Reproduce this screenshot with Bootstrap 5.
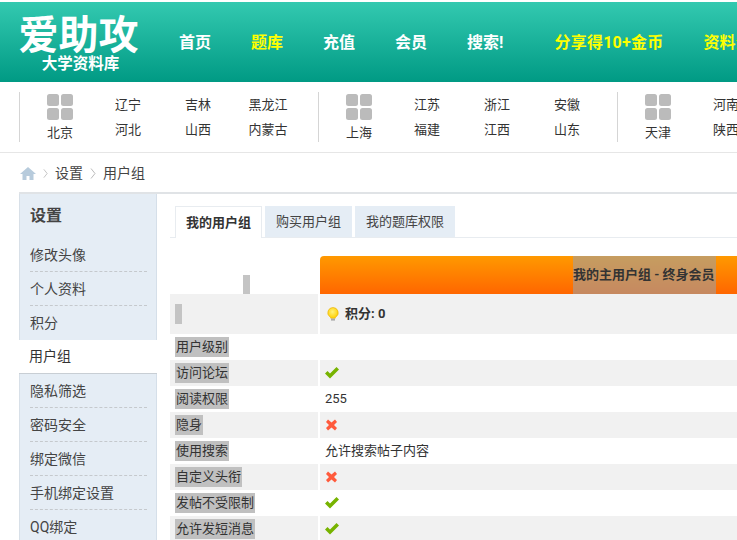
<!DOCTYPE html>
<html lang="zh">
<head>
<meta charset="UTF-8">
<title>用户组</title>
<link href="https://cdn.jsdelivr.net/npm/bootstrap@5.3.0/dist/css/bootstrap.min.css" rel="stylesheet">
<style>
html, body { overflow: hidden; }
body { font-family: Roboto, "Noto Sans CJK SC", sans-serif; font-size: 13px; color: #333; background: #fff; width: 737px; height: 540px; }
.page-wrap { width: 1180px; }
a { color: inherit; text-decoration: none; }

.top-head { margin-top: 2px; height: 80px; background: linear-gradient(#33c9b0, #009a84); padding-left: 18px; }
.logo-box { width: 121px; color: #fff; font-weight: 700; text-align: center; margin-right: 40px; }
.logo-main { font-size: 40px; line-height: 40px; margin-top: 14px; white-space: nowrap; }
.logo-sub { font-size: 15.500px; line-height: 16px; padding-left: 4px; white-space: nowrap; }
.top-menu { gap: 40px; font-size: 16px; font-weight: 700; color: #fff; padding-top: 2px; white-space: nowrap; }
.top-menu .hot { color: #ff0; }
.top-menu .share-link { margin-left: 11px; letter-spacing: .25px; }

.area-bar { height: 71px; border-bottom: 1px solid #e6e6e6; padding: 10px 0 0 19px; }
.area-group { width: 299px; height: 50px; border-left: 1px solid #d5d5d5; flex: none; }
.area-city { width: 80px; text-align: center; line-height: 14px; }
.grid-ico { display: block; margin: 2px auto 6px; }
.area-list { display: grid; grid-template-columns: 70px 70px 70px; justify-items: center; line-height: 25px; width: 210px; margin-left: -7px; }

.crumbs { height: 39px; padding: 1px 0 0 20px; color: #444; font-size: 14px; }
.crumb-sep { margin: 0 7px; }

.main-box { margin-left: 19px; border-top: 2px solid #e0e3e6; }
.side-col { width: 138px; flex: none; background: #e5edf5; border-left: 1px solid #d8e0e8; border-right: 1px solid #d5dfe9; padding-bottom: 60px; }
.side-title { font-size: 16px; font-weight: 700; height: 44px; line-height: 44px; padding-left: 10px; color: #444; }
.side-item { height: 34px; line-height: 34px; font-size: 14px; margin: 0 9px 0 10px; color: #444; border-bottom: 1px dashed #c5c9cd; }
.side-item.flat { border-bottom: 0; }
.side-on { height: 34px; line-height: 33px; font-size: 14px; padding-left: 10px; margin: 0 -1px; background: #fff; border-bottom: 1px solid #c8ced4; color: #333; }

.content-col { padding: 12px 0 0 13px; flex: 1; }
.tab-row { height: 32px; gap: 3px; border-bottom: 1px solid #e8ecf0; padding-left: 5px; }
.tab-btn { height: 31px; line-height: 31px; padding: 0 11px; background: #e5edf5; color: #444; }
.tab-btn.on { font-weight: 700; background: #fff; border: 1px solid #e8ecf0; border-bottom: 0; height: 32px; padding: 0 10px; color: #333; }

.group-tbl { margin-top: 18px; }
.head-row { height: 38px; }
.lbl-cell { width: 150px; flex: none; padding-left: 5px; border-right: 2px solid #fff; }
.orange-head { width: 700px; background: linear-gradient(#ff9900, #ff6600); border-radius: 4px 0 0 0; font-weight: 700; color: #333; height: 38px; line-height: 38px; padding-left: 253px; }
.orange-head span { display: inline-block; background: rgba(160,160,160,.6); height: 38px; padding-right: 1px; }
.gray-stub { display: block; background: #c4c4c4; }
.stub-top { width: 7px; height: 19px; margin-left: 0; }
.stub-score { width: 7px; height: 20px; }
.data-row { height: 26px; line-height: 26px; }
.data-row.alt { background: #f1f1f1; }
.score-row { height: 40px; line-height: 40px; background: #f1f1f1; }
.lbl-mark { background: #c0c0c0; display: inline-block; height: 20px; line-height: 20px; padding: 0 1px; color: #333; }
.val-cell { padding-left: 5px; }
</style>
</head>
<body>
<div class="page-wrap">

  <div class="top-head d-flex">
    <div class="logo-box">
      <div class="logo-main">爱助攻</div>
      <div class="logo-sub">大学资料库</div>
    </div>
    <div class="top-menu d-flex align-items-center">
      <a href="#">首页</a>
      <a href="#" class="hot">题库</a>
      <a href="#">充值</a>
      <a href="#">会员</a>
      <a href="#">搜索!</a>
      <a href="#" class="hot share-link">分享得10+金币</a>
      <a href="#" class="hot">资料分享</a>
    </div>
  </div>

  <div class="area-bar d-flex">
    <div class="area-group d-flex">
      <div class="area-city">
        <svg class="grid-ico" width="26" height="26" viewBox="0 0 26 26"><g fill="#bbb"><rect width="12" height="12" rx="2.500"/><rect x="14" width="12" height="12" rx="2.500"/><rect y="14" width="12" height="12" rx="2.500"/><rect x="14" y="14" width="12" height="12" rx="2.500"/></g></svg>
        北京
      </div>
      <div class="area-list"><a href="#">辽宁</a><a href="#">吉林</a><a href="#">黑龙江</a><a href="#">河北</a><a href="#">山西</a><a href="#">内蒙古</a></div>
    </div>
    <div class="area-group d-flex">
      <div class="area-city">
        <svg class="grid-ico" width="26" height="26" viewBox="0 0 26 26"><g fill="#bbb"><rect width="12" height="12" rx="2.500"/><rect x="14" width="12" height="12" rx="2.500"/><rect y="14" width="12" height="12" rx="2.500"/><rect x="14" y="14" width="12" height="12" rx="2.500"/></g></svg>
        上海
      </div>
      <div class="area-list"><a href="#">江苏</a><a href="#">浙江</a><a href="#">安徽</a><a href="#">福建</a><a href="#">江西</a><a href="#">山东</a></div>
    </div>
    <div class="area-group d-flex">
      <div class="area-city">
        <svg class="grid-ico" width="26" height="26" viewBox="0 0 26 26"><g fill="#bbb"><rect width="12" height="12" rx="2.500"/><rect x="14" width="12" height="12" rx="2.500"/><rect y="14" width="12" height="12" rx="2.500"/><rect x="14" y="14" width="12" height="12" rx="2.500"/></g></svg>
        天津
      </div>
      <div class="area-list"><a href="#">河南</a><a href="#">湖北</a><a href="#">湖南</a><a href="#">陕西</a><a href="#">四川</a><a href="#">重庆</a></div>
    </div>
  </div>

  <div class="crumbs d-flex align-items-center">
    <svg width="16" height="13" viewBox="0 0 16 13"><path d="M8 0 0 7h2.500v6h4V9h3v4h4V7H16z" fill="#b7cbdc"/></svg>
    <svg class="crumb-sep" width="5" height="11" viewBox="0 0 6 11"><path d="M1 .5 5 5.500 1 10.500" fill="none" stroke="#bbb"/></svg>
    <a href="#">设置</a>
    <svg class="crumb-sep" width="6" height="11" viewBox="0 0 6 11"><path d="M1 .5 5 5.500 1 10.500" fill="none" stroke="#bbb"/></svg>
    <a href="#">用户组</a>
  </div>

  <div class="main-box d-flex">
    <div class="side-col">
      <div class="side-title">设置</div>
      <div class="side-item">修改头像</div>
      <div class="side-item">个人资料</div>
      <div class="side-item flat">积分</div>
      <div class="side-on">用户组</div>
      <div class="side-item">隐私筛选</div>
      <div class="side-item">密码安全</div>
      <div class="side-item">绑定微信</div>
      <div class="side-item">手机绑定设置</div>
      <div class="side-item flat">QQ绑定</div>
    </div>

    <div class="content-col">
      <div class="tab-row d-flex">
        <a href="#" class="tab-btn on">我的用户组</a>
        <a href="#" class="tab-btn">购买用户组</a>
        <a href="#" class="tab-btn">我的题库权限</a>
      </div>

      <div class="group-tbl">
        <div class="head-row d-flex">
          <div class="lbl-cell d-flex justify-content-center align-items-end"><i class="gray-stub stub-top"></i></div>
          <div class="orange-head"><span>我的主用户组 - 终身会员</span></div>
        </div>
        <div class="score-row d-flex">
          <div class="lbl-cell d-flex align-items-center"><i class="gray-stub stub-score"></i></div>
          <div class="val-cell fw-bold d-flex align-items-center gap-1">
            <svg width="16" height="16" viewBox="0 0 16 16"><defs><radialGradient id="bulbFill" cx=".45" cy=".4" r=".6"><stop offset="0" stop-color="#fff27a"/><stop offset="1" stop-color="#ffcf00"/></radialGradient></defs><path d="M8 1.500a5.200 5.200 0 0 0-3.200 9.300c.7.600 1 .9 1 1.500h4.400c0-.6.300-.9 1-1.500A5.200 5.200 0 0 0 8 1.500z" fill="url(#bulbFill)" stroke="#e8ad00" stroke-width=".6"/><rect x="6" y="12.600" width="4" height="2" fill="#aaa"/></svg>
            <span>积分: 0</span>
          </div>
        </div>
        <div class="data-row d-flex"><div class="lbl-cell"><span class="lbl-mark">用户级别</span></div><div class="val-cell"></div></div>
        <div class="data-row alt d-flex"><div class="lbl-cell"><span class="lbl-mark">访问论坛</span></div><div class="val-cell d-flex align-items-center"><svg width="14" height="12" viewBox="0 0 14 12"><path d="M0 6.500 2.500 4 5 6.500 11.500 0 14 2.500 5 11.500z" fill="#77b300"/></svg></div></div>
        <div class="data-row d-flex"><div class="lbl-cell"><span class="lbl-mark">阅读权限</span></div><div class="val-cell">255</div></div>
        <div class="data-row alt d-flex"><div class="lbl-cell"><span class="lbl-mark">隐身</span></div><div class="val-cell d-flex align-items-center"><svg width="14" height="12" viewBox="0 0 14 12"><path d="M1 3 4 6 1 9l2 2.500 3.500-3 3.500 3L12 9 9 6l3-3L10 .5l-3.500 3L3 .5z" fill="#ff5a3c"/></svg></div></div>
        <div class="data-row d-flex"><div class="lbl-cell"><span class="lbl-mark">使用搜索</span></div><div class="val-cell">允许搜索帖子内容</div></div>
        <div class="data-row alt d-flex"><div class="lbl-cell"><span class="lbl-mark">自定义头衔</span></div><div class="val-cell d-flex align-items-center"><svg width="14" height="12" viewBox="0 0 14 12"><path d="M1 3 4 6 1 9l2 2.500 3.500-3 3.500 3L12 9 9 6l3-3L10 .5l-3.500 3L3 .5z" fill="#ff5a3c"/></svg></div></div>
        <div class="data-row d-flex"><div class="lbl-cell"><span class="lbl-mark">发帖不受限制</span></div><div class="val-cell d-flex align-items-center"><svg width="14" height="12" viewBox="0 0 14 12"><path d="M0 6.500 2.500 4 5 6.500 11.500 0 14 2.500 5 11.500z" fill="#77b300"/></svg></div></div>
        <div class="data-row alt d-flex"><div class="lbl-cell"><span class="lbl-mark">允许发短消息</span></div><div class="val-cell d-flex align-items-center"><svg width="14" height="12" viewBox="0 0 14 12"><path d="M0 6.500 2.500 4 5 6.500 11.500 0 14 2.500 5 11.500z" fill="#77b300"/></svg></div></div>
      </div>
    </div>
  </div>
</div>
<script src="https://cdn.jsdelivr.net/npm/bootstrap@5.3.0/dist/js/bootstrap.bundle.min.js"></script>
</body>
</html>
